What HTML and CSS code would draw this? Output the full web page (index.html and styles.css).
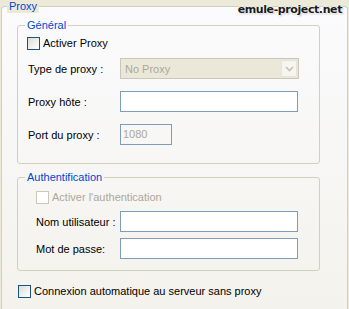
FILE: index.html
```html
<!DOCTYPE html>
<html lang="fr">
<head>
<meta charset="utf-8">
<title>Proxy</title>
<link rel="stylesheet" href="styles.css">
</head>
<body>
<div class="watermark">emule-project.net</div>
<fieldset class="group outer">
  <legend>Proxy</legend>
  <fieldset class="group general">
    <legend>Général</legend>
    <label class="check"><span class="box"></span>Activer Proxy</label>
    <div class="form">
      <span class="lbl">Type de proxy :</span>
      <div class="select">
        <span class="val">No Proxy</span>
        <span class="btn"><svg width="9" height="6" viewBox="0 0 9 6"><path d="M1 1 L4.5 4.5 L8 1" fill="none" stroke="#c4c2b4" stroke-width="1.6"/></svg></span>
      </div>
      <span class="lbl">Proxy hôte :</span>
      <span class="input wide"></span>
      <span class="lbl">Port du proxy :</span>
      <span class="input small ro">1080</span>
    </div>
  </fieldset>
  <fieldset class="group auth">
    <legend>Authentification</legend>
    <label class="check off"><span class="box"></span>Activer l'authentication</label>
    <div class="form">
      <span class="lbl">Nom utilisateur :</span>
      <span class="input wide"></span>
      <span class="lbl">Mot de passe:</span>
      <span class="input wide"></span>
    </div>
  </fieldset>
  <label class="check main"><span class="box"></span>Connexion automatique au serveur sans proxy</label>
</fieldset>
</body>
</html>
```
FILE: styles.css
```css
html, body {
  margin: 0;
  padding: 0;
}
body {
  background: #ece9d8;
  font-family: "Liberation Sans", Arial, sans-serif;
  font-size: 11px;
  color: #000;
  width: 349px;
  height: 309px;
  overflow: hidden;
  position: relative;
}
.group {
  box-sizing: border-box;
  border: 1px solid #d0d0bf;
  padding: 0;
  min-width: 0;
}
.group > legend {
  font-size: 11px;
  line-height: 13px;
  height: 13px;
  color: #0046d5;
  padding: 0 2px;
}
.outer {
  margin: 0 0 0 1px;
  width: 347px;
  height: 309px;
  border-bottom: none;
  border-radius: 4px 4px 0 0;
  background: linear-gradient(#fbfbfd, #f3f2ec);
}
.outer > legend {
  margin-left: 5px;
  background: #ece9d8;
}
.general, .auth {
  width: 303px;
  margin-left: 15px;
  border-radius: 3px;
}
.general > legend, .auth > legend {
  margin-left: 7px;
}
.general {
  margin-top: 6px;
  padding-bottom: 18px;
}
.auth {
  margin-top: 7px;
  padding-bottom: 11px;
}
.check {
  display: flex;
  align-items: center;
  gap: 3px;
  height: 13px;
  line-height: 13px;
  white-space: nowrap;
}
.box {
  box-sizing: border-box;
  width: 13px;
  height: 13px;
  flex: none;
  border: 1px solid #1c5180;
  background: linear-gradient(135deg, #dcdcd5, #f6f6f3 70%, #fff);
}
.general .check {
  margin: 5px 0 0 9px;
}
.auth .check {
  margin: 7px 0 0 18px;
}
.check.off {
  color: #aca899;
}
.check.off .box {
  border-color: #cac8bb;
  background: #fff;
}
.check.main {
  margin: 14px 0 0 16px;
}
.form {
  display: grid;
  align-items: center;
}
.general .form {
  margin-top: 8px;
  padding-left: 10px;
  grid-template-columns: 92px auto;
  row-gap: 12px;
}
.auth .form {
  margin-top: 7px;
  padding-left: 18px;
  grid-template-columns: 84px auto;
  row-gap: 6px;
}
.lbl {
  white-space: nowrap;
}
.select {
  box-sizing: border-box;
  width: 179px;
  height: 21px;
  border: 1px solid #c9c7ba;
  background: #ebe8da;
  display: flex;
  align-items: center;
  justify-content: space-between;
  padding: 1px;
}
.select .val {
  color: #aca899;
  padding-left: 3px;
}
.select .btn {
  box-sizing: border-box;
  width: 16px;
  height: 17px;
  border: 1px solid #e6e4da;
  border-radius: 2px;
  background: #f6f5f0;
  display: flex;
  align-items: center;
  justify-content: center;
}
.input {
  box-sizing: border-box;
  display: block;
  height: 21px;
  border: 1px solid #7f9db9;
  background: #fff;
  line-height: 19px;
}
.input.wide {
  width: 178px;
}
.input.small {
  width: 52px;
}
.input.ro {
  background: transparent;
  color: #aca899;
  padding-left: 2px;
}
.watermark {
  position: absolute;
  top: 3px;
  right: 7px;
  font-family: "DejaVu Sans", Verdana, sans-serif;
  font-weight: bold;
  font-size: 11px;
  letter-spacing: -0.4px;
  line-height: 14px;
  color: #1a1a1a;
  text-shadow: 0 0 2px #fff, 0 0 2px #fff, 0 0 3px #fff, 1px 1px 2px rgba(0,0,0,0.35);
  z-index: 1;
}
```
